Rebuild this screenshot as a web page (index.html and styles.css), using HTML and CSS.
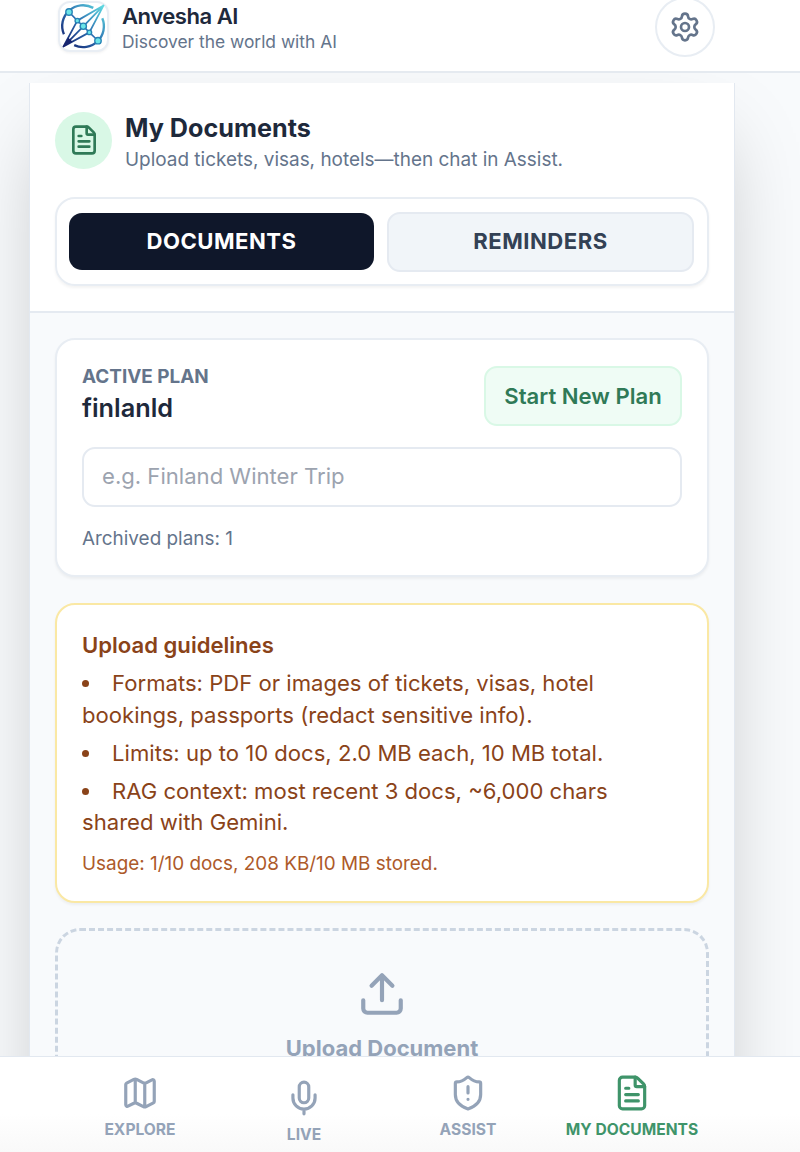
FILE: index.html
```html
<!DOCTYPE html>
<html lang="en">
<head>
    <meta charset="UTF-8">
    <meta name="viewport" content="width=device-width, initial-scale=1.0">
    <title>Anvesha AI</title>
    <link rel="stylesheet" href="styles.css">
</head>

<body>
    <header class="app-header">
        <div class="logo">
            <svg viewBox="0 0 48 48" width="47" height="47">
                <defs>
                    <linearGradient id="logoFill" gradientUnits="userSpaceOnUse" x1="4" y1="44" x2="44" y2="4">
                        <stop offset="0" stop-color="#15206b"/>
                        <stop offset="0.5" stop-color="#2b6cb0"/>
                        <stop offset="1" stop-color="#5fd8e0"/>
                    </linearGradient>
                </defs>
                <g fill="none" stroke="url(#logoFill)" stroke-linejoin="round">
                    <path d="M34 5A21.300 21.300 0 0 0 4 32M14.500 43A21.300 21.300 0 0 0 43.200 15.500" stroke-width="2.400"/>
                    <path d="M44.500 2.500 17.700 18 3.500 44.500 30 30ZM44.500 2.500 23.800 23.800 3.500 44.500" stroke-width="1.800"/>
                    <path d="M9.200 9.200 17.700 18 23.800 23.800 30 30 38.800 38.500" stroke-width="1.600"/>
                    <path d="M3.500 44.500 8.500 35.500 13 39.500Z" fill="#18256f" stroke="none"/>
                </g>
                <g fill="#6be4e8" stroke="#2683b5" stroke-width="1.400">
                    <circle cx="9.200" cy="9.200" r="3.300"/>
                    <circle cx="17.700" cy="18" r="2.300"/>
                    <circle cx="23.800" cy="23.800" r="3.200"/>
                    <circle cx="30" cy="30" r="2.300"/>
                    <circle cx="38.800" cy="38.500" r="3.300"/>
                </g>
            </svg>
        </div>
        <div class="brand">
            <h1>Anvesha AI</h1>
            <p>Discover the world with AI</p>
        </div>
        <button class="settings-button" aria-label="Settings">
            <svg class="icon" width="32" height="32" viewBox="0 0 24 24">
                <path d="M9.671 4.136a2.340 2.340 0 0 1 4.659 0 2.340 2.340 0 0 0 3.319 1.915 2.340 2.340 0 0 1 2.330 4.033 2.340 2.340 0 0 0 0 3.831 2.340 2.340 0 0 1-2.330 4.033 2.340 2.340 0 0 0-3.319 1.915 2.340 2.340 0 0 1-4.659 0 2.340 2.340 0 0 0-3.320-1.915 2.340 2.340 0 0 1-2.330-4.033 2.340 2.340 0 0 0 0-3.831A2.340 2.340 0 0 1 6.350 6.051a2.340 2.340 0 0 0 3.319-1.915"/>
                <circle cx="12" cy="12" r="3"/>
            </svg>
        </button>
    </header>

    <main class="page">
        <div class="panel">
            <div class="panel-header">
                <div class="title-row">
                    <div class="title-icon">
                        <svg class="icon" width="32" height="32" viewBox="0 0 24 24">
                            <path d="M6 22a2 2 0 0 1-2-2V4a2 2 0 0 1 2-2h8a2.400 2.400 0 0 1 1.704.706l3.588 3.588A2.400 2.400 0 0 1 20 8v12a2 2 0 0 1-2 2z"/>
                            <path d="M14 2v5a1 1 0 0 0 1 1h5M10 9H8M16 13H8M16 17H8"/>
                        </svg>
                    </div>
                    <div class="title-text">
                        <h2>My Documents</h2>
                        <p>Upload tickets, visas, hotels—then chat in Assist.</p>
                    </div>
                </div>
                <div class="tabs">
                    <button class="tab active">DOCUMENTS</button>
                    <button class="tab">REMINDERS</button>
                </div>
            </div>

            <div class="panel-body">
                <section class="card">
                    <div class="plan-row">
                        <div class="plan-info">
                            <p class="plan-label">ACTIVE PLAN</p>
                            <p class="plan-name">finlanld</p>
                        </div>
                        <button class="new-plan">Start New Plan</button>
                    </div>
                    <input class="plan-input" type="text" placeholder="e.g. Finland Winter Trip">
                    <p class="archived">Archived plans: 1</p>
                </section>

                <section class="card guidelines">
                    <h3>Upload guidelines</h3>
                    <ul>
                        <li>Formats: PDF or images of tickets, visas, hotel bookings, passports (redact sensitive info).</li>
                        <li>Limits: up to 10 docs, 2.0 MB each, 10 MB total.</li>
                        <li>RAG context: most recent 3 docs, ~6,000 chars shared with Gemini.</li>
                    </ul>
                    <p class="usage">Usage: 1/10 docs, 208 KB/10 MB stored.</p>
                </section>

                <section class="dropzone">
                    <svg class="icon" width="50" height="50" viewBox="0 0 24 24">
                        <path d="M12 3v12M17 8l-5-5-5 5M21 15v4a2 2 0 0 1-2 2H5a2 2 0 0 1-2-2v-4"/>
                    </svg>
                    <p>Upload Document</p>
                </section>
            </div>
        </div>
    </main>

    <nav class="bottom-nav">
        <a class="nav-item">
            <svg class="icon" width="38" height="38" viewBox="0 0 24 24">
                <path d="M14.106 5.553a2 2 0 0 0 1.788 0l3.659-1.830A1 1 0 0 1 21 4.619v12.764a1 1 0 0 1-.553.894l-4.553 2.277a2 2 0 0 1-1.788 0l-4.212-2.106a2 2 0 0 0-1.788 0l-3.659 1.830A1 1 0 0 1 3 19.381V6.618a1 1 0 0 1 .553-.894l4.553-2.277a2 2 0 0 1 1.788 0zM15 5.764v15M9 3.236v15"/>
            </svg>
            <span>EXPLORE</span>
        </a>
        <a class="nav-item nav-live">
            <svg class="icon" width="38" height="38" viewBox="0 0 24 24">
                <path d="M12 19v3M19 10v2a7 7 0 0 1-14 0v-2"/>
                <rect x="9" y="2" width="6" height="13" rx="3"/>
            </svg>
            <span>LIVE</span>
        </a>
        <a class="nav-item">
            <svg class="icon" width="38" height="38" viewBox="0 0 24 24">
                <path d="M20 13c0 5-3.500 7.500-7.660 8.950a1 1 0 0 1-.670-.010C7.500 20.500 4 18 4 13V6a1 1 0 0 1 1-1c2 0 4.500-1.200 6.240-2.720a1.170 1.170 0 0 1 1.520 0C14.510 3.810 17 5 19 5a1 1 0 0 1 1 1zM12 8v4M12 16h.010"/>
            </svg>
            <span>ASSIST</span>
        </a>
        <a class="nav-item active">
            <svg class="icon" width="38" height="38" viewBox="0 0 24 24">
                <path d="M6 22a2 2 0 0 1-2-2V4a2 2 0 0 1 2-2h8a2.400 2.400 0 0 1 1.704.706l3.588 3.588A2.400 2.400 0 0 1 20 8v12a2 2 0 0 1-2 2z"/>
                <path d="M14 2v5a1 1 0 0 0 1 1h5M10 9H8M16 13H8M16 17H8"/>
            </svg>
            <span>MY DOCUMENTS</span>
        </a>
    </nav>
</body>

</html>
```
FILE: styles.css
```css
* {
    box-sizing: border-box;
    margin: 0;
    padding: 0;
}

body {
    display: flex;
    flex-direction: column;
    height: 1152px;
    overflow: hidden;
    font-family: Inter, "Liberation Sans", sans-serif;
    font-size: 22.1px;
    color: #1e293b;
    background-color: #f8fafc;
}

button,
input {
    font-family: inherit;
    font-size: inherit;
}

.icon {
    display: block;
    flex-shrink: 0;
    fill: none;
    stroke: currentColor;
    stroke-width: 2;
    stroke-linecap: round;
    stroke-linejoin: round;
}

/* header */
.app-header {
    display: flex;
    align-items: center;
    flex-shrink: 0;
    height: 91px;
    margin-top: -18px;
    padding: 0 85px 0 58px;
    background: white;
    border-bottom: 2px solid #e5eaf0;
}

.logo {
    display: flex;
    align-items: center;
    justify-content: center;
    width: 51px;
    height: 51px;
    background: white;
    border: 2px solid #e9eef4;
    border-radius: 12px;
    box-shadow: 0 1px 3px rgba(0,0,0,0.06);
}

.brand {
    flex: 1;
    margin-left: 13px;
    padding-top: 3px;
}

.brand h1 {
    font-size: 22.1px;
    line-height: 27px;
    font-weight: 600;
    letter-spacing: -0.5px;
}

.brand p {
    font-size: 17.4px;
    line-height: 24px;
    color: #64748b;
}

.settings-button {
    display: flex;
    align-items: center;
    justify-content: center;
    width: 60px;
    height: 60px;
    color: #64748b;
    background: white;
    border: 2px solid #e8edf3;
    border-radius: 50%;
}

/* main panel */
.page {
    flex: 1;
    min-height: 0;
    overflow: hidden;
    padding: 10px 65px 0 29px;
}

.panel {
    height: 1200px;
    background: #f8fafc;
    border: 1px solid #e2e8f0;
    border-top: none;
    box-shadow: 0 40px 79px -19px rgba(0,0,0,0.25);
}

.panel-header {
    height: 230px;
    padding: 28px 25px 0;
    background: white;
    border-bottom: 2px solid #e5eaf1;
}

.title-row {
    display: flex;
    align-items: center;
    gap: 13px;
    height: 58px;
}

.title-icon {
    display: flex;
    align-items: center;
    justify-content: center;
    width: 57px;
    height: 57px;
    color: #2f7a57;
    background: #d9f8e6;
    border-radius: 50%;
}

.title-text {
    padding-top: 7px;
}

.title-text h2 {
    font-size: 25.2px;
    line-height: 32px;
    font-weight: 700;
}

.title-text p {
    font-size: 18.95px;
    line-height: 31px;
    color: #64748b;
}

.tabs {
    display: grid;
    grid-template-columns: 305px 307px;
    gap: 13px;
    align-items: center;
    height: 89px;
    margin-top: 28px;
    padding: 0 12px;
    border: 2px solid #e8edf3;
    border-radius: 20px;
    box-shadow: 0 2px 3px rgba(0,0,0,0.05);
}

.tab {
    height: 60px;
    padding-bottom: 1px;
    font-weight: 700;
    letter-spacing: 0.5px;
    color: #334155;
    background: #f1f5f9;
    border: 2px solid #e5eaf1;
    border-radius: 13px;
}

.tab.active {
    height: 57px;
    color: white;
    background: #0f172a;
    border: none;
}

.panel-body {
    display: flex;
    flex-direction: column;
    gap: 26px;
    padding: 25px;
}

.card {
    padding: 26px 25px 0;
    background: white;
    border: 2px solid #e8edf3;
    border-radius: 20px;
    box-shadow: 0 2px 3px rgba(0,0,0,0.05);
}

/* active plan */
.card:first-child {
    height: 239px;
}

.plan-row {
    display: flex;
    justify-content: space-between;
    height: 60px;
}

.plan-label {
    padding-top: 1px;
    font-size: 18.9px;
    line-height: 20px;
    font-weight: 700;
    color: #64748b;
}

.plan-name {
    font-size: 25.3px;
    line-height: 42px;
    font-weight: 600;
}

.new-plan {
    width: 198px;
    height: 60px;
    font-weight: 600;
    color: #2f7a57;
    background: #effcf5;
    border: 2px solid #d9f8e6;
    border-radius: 13px;
}

.plan-input {
    display: block;
    width: 100%;
    height: 60px;
    margin-top: 21px;
    padding: 0 18px 2px;
    border: 2px solid #e5eaf1;
    border-radius: 13px;
}

.plan-input::placeholder {
    color: #9ca3af;
}

.archived {
    margin-top: 18px;
    font-size: 18.9px;
    line-height: 27px;
    color: #64748b;
}

/* guidelines */
.guidelines {
    height: 300px;
    padding-top: 24px;
    color: #8a4319;
    border-color: #fae8a4;
}

.guidelines h3 {
    font-size: 22.1px;
    line-height: 32px;
    font-weight: 600;
}

.guidelines ul {
    padding-top: 1px;
    list-style-position: inside;
}

.guidelines li {
    margin-top: 6.3px;
    line-height: 31.6px;
}

.usage {
    margin-top: 12px;
    font-size: 18.9px;
    line-height: 25px;
    color: #ad5a2a;
}

/* upload */
.dropzone {
    display: flex;
    flex-direction: column;
    align-items: center;
    height: 260px;
    margin-top: -1px;
    padding-top: 38px;
    color: #94a3b8;
    border: 3px dashed #cbd5e1;
    border-radius: 25px;
}

.dropzone p {
    margin-top: 13px;
    font-size: 22px;
    line-height: 32px;
    font-weight: 700;
}

/* bottom nav */
.bottom-nav {
    display: flex;
    flex-shrink: 0;
    height: 96px;
    padding: 0 86px 0 58px;
    background: linear-gradient(white 60%, #f9f9f9);
    border-top: 1px solid #e2e8f0;
}

.nav-item {
    display: flex;
    flex: 1;
    flex-direction: column;
    align-items: center;
    gap: 8px;
    padding-top: 17px;
    color: #94a3b8;
}

.nav-item span {
    font-size: 15.6px;
    line-height: 20px;
    font-weight: 700;
    white-space: nowrap;
}

.nav-live {
    padding-top: 22px;
}

.nav-item.active {
    color: #3f946a;
}
```
